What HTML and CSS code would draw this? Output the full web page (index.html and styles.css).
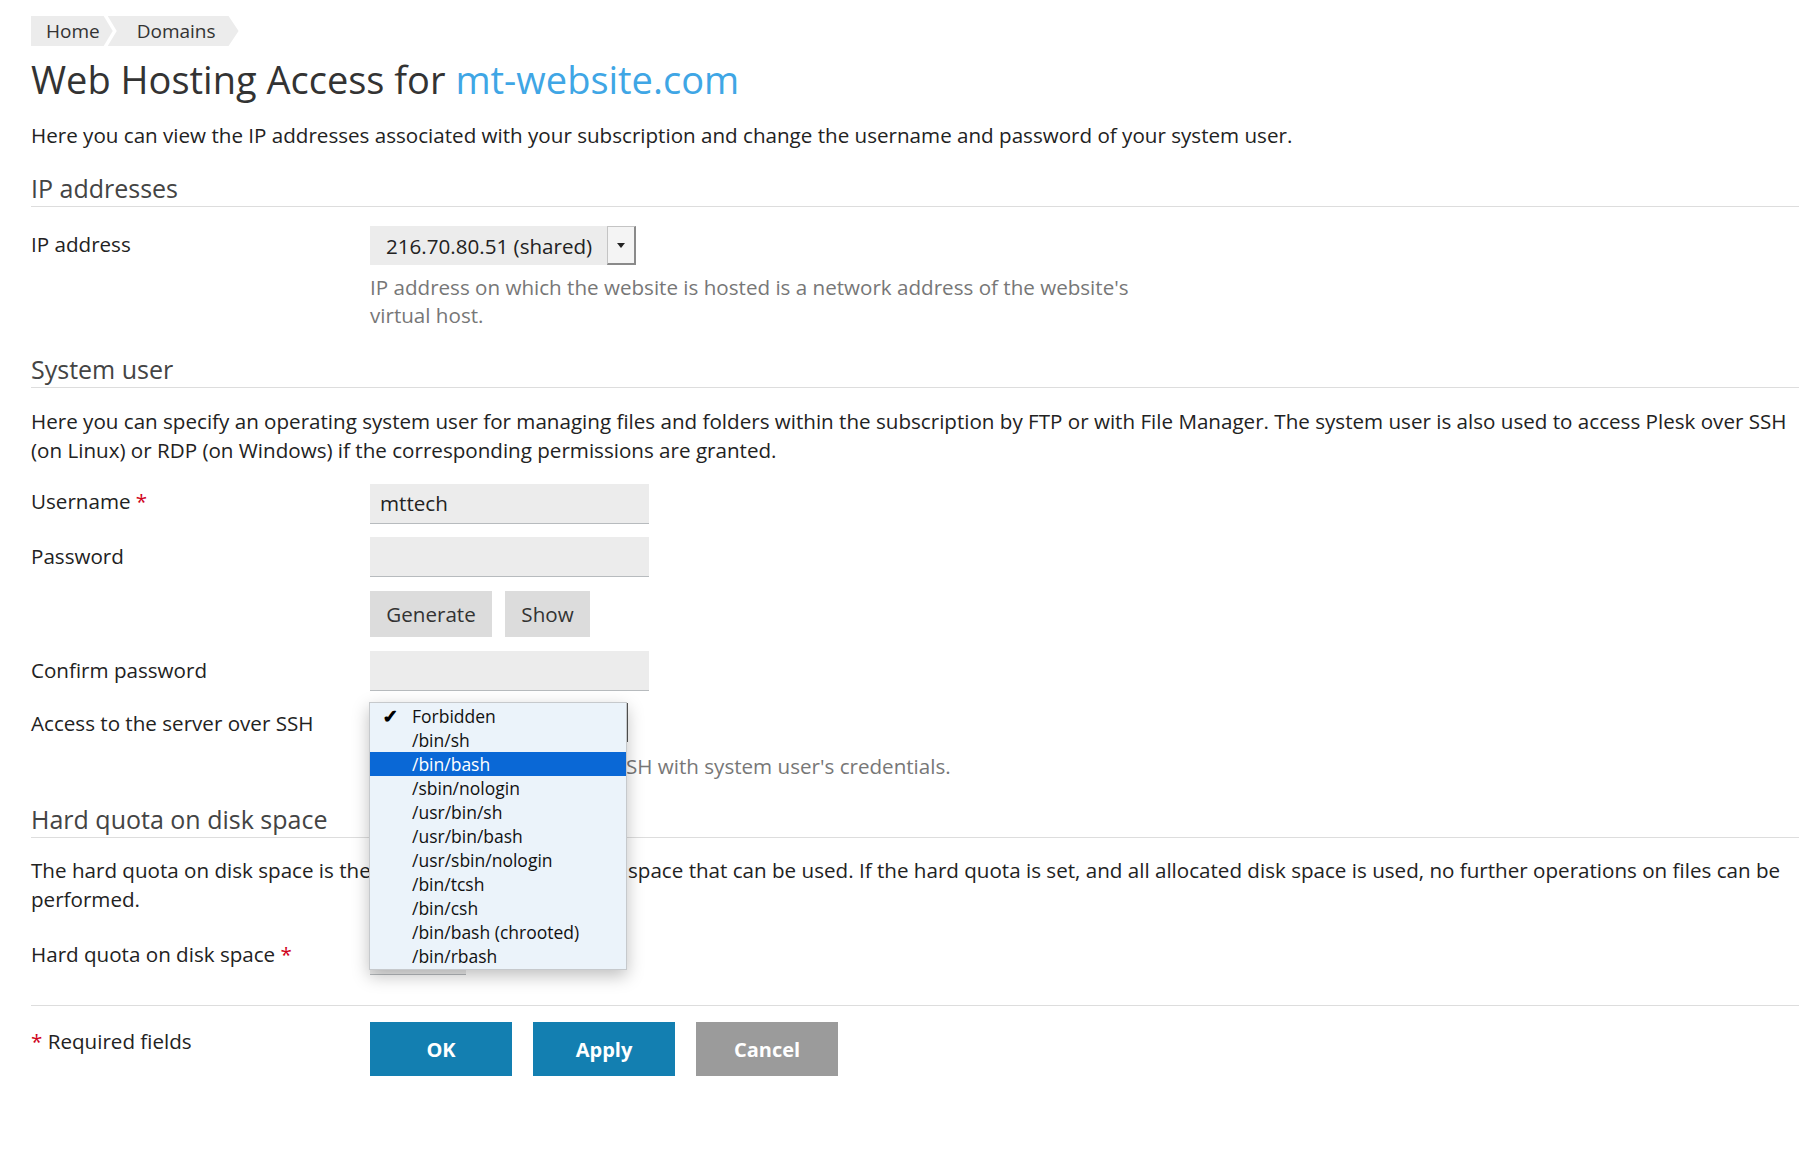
FILE: index.html
```html
<!DOCTYPE html>
<html>
<head>
<meta charset="utf-8">
<link rel="stylesheet" href="styles.css">
</head>
<body>
<div class="page">
  <div class="breadcrumb">
    <span class="crumb crumb-first">Home</span>
    <span class="crumb crumb-next">Domains</span>
  </div>
  <h1 class="title">Web Hosting Access for <span class="domain">mt-website.com</span></h1>
  <p class="intro">Here you can view the IP addresses associated with your subscription and change the username and password of your system user.</p>

  <h2 class="section">IP addresses</h2>
  <div class="row row-ip">
    <div class="label">IP address</div>
    <div class="field">
      <div class="select">
        <span class="select-value">216.70.80.51 (shared)</span>
        <span class="select-arrow"><span class="tri"></span></span>
      </div>
      <div class="hint">IP address on which the website is hosted is a network address of the website's virtual host.</div>
    </div>
  </div>

  <h2 class="section section-sys">System user</h2>
  <p class="desc">Here you can specify an operating system user for managing files and folders within the subscription by FTP or with File Manager. The system user is also used to access Plesk over SSH (on Linux) or RDP (on Windows) if the corresponding permissions are granted.</p>

  <div class="row row-user">
    <div class="label">Username <span class="req">*</span></div>
    <div class="field"><div class="input">mttech</div></div>
  </div>
  <div class="row row-pass">
    <div class="label">Password</div>
    <div class="field"><div class="input"></div></div>
  </div>
  <div class="row row-btns">
    <div class="label"></div>
    <div class="field btns">
      <span class="btn-gray btn-gen">Generate</span>
      <span class="btn-gray btn-show">Show</span>
    </div>
  </div>
  <div class="row row-confirm">
    <div class="label">Confirm password</div>
    <div class="field"><div class="input"></div></div>
  </div>
  <div class="row row-ssh">
    <div class="label label-ssh">Access to the server over SSH</div>
    <div class="field field-ssh">
      <div class="select-hidden"></div>
      <div class="hint hint-ssh">Access to the server over SSH with system user's credentials.</div>
      <ul class="menu">
        <li class="menu-item checked"><span class="check">✓</span>Forbidden</li>
        <li class="menu-item">/bin/sh</li>
        <li class="menu-item active">/bin/bash</li>
        <li class="menu-item">/sbin/nologin</li>
        <li class="menu-item">/usr/bin/sh</li>
        <li class="menu-item">/usr/bin/bash</li>
        <li class="menu-item">/usr/sbin/nologin</li>
        <li class="menu-item">/bin/tcsh</li>
        <li class="menu-item">/bin/csh</li>
        <li class="menu-item">/bin/bash (chrooted)</li>
        <li class="menu-item">/bin/rbash</li>
      </ul>
    </div>
  </div>

  <h2 class="section section-quota">Hard quota on disk space</h2>
  <p class="desc desc-quota">The hard quota on disk space is the maximum amount of disk space that can be used. If the hard quota is set, and all allocated disk space is used, no further operations on files can be performed.</p>
  <div class="row row-quota">
    <div class="label">Hard quota on disk space <span class="req">*</span></div>
    <div class="field"><div class="input input-quota"></div></div>
  </div>

  <div class="footer">
    <div class="label label-footer"><span class="req">*</span> Required fields</div>
    <div class="field actions">
      <span class="btn btn-primary">OK</span>
      <span class="btn btn-primary">Apply</span>
      <span class="btn btn-cancel">Cancel</span>
    </div>
  </div>
</div>
</body>
</html>
```
FILE: styles.css
```css
html, body {
  margin: 0;
  padding: 0;
  background: #ffffff;
}
body {
  font-family: "Open Sans", "Liberation Sans", sans-serif;
  font-size: 20.6px;
  color: #222222;
}
.page {
  padding: 16px 21px 40px 31px;
}
.breadcrumb {
  display: flex;
  height: 30px;
}
.crumb {
  display: flex;
  align-items: center;
  background: #ececec;
  color: #333;
  font-size: 19px;
  height: 30px;
}
.crumb-first {
  padding: 0 13px 0 15px;
  clip-path: polygon(0 0, calc(100% - 9px) 0, 100% 50%, calc(100% - 9px) 100%, 0 100%);
}
.crumb-next {
  margin-left: -5px;
  padding: 0 23px 0 29px;
  clip-path: polygon(0 0, calc(100% - 10px) 0, 100% 50%, calc(100% - 10px) 100%, 0 100%, 9px 50%);
}
.title {
  margin: 11px 0 0 0;
  font-size: 38px;
  line-height: 44px;
  font-weight: 400;
  color: #333;
}
.domain {
  color: #3fa6e5;
}
.intro {
  margin: 20px 0 0 0;
  line-height: 28px;
}
.section {
  margin: 24px 0 0 0;
  font-size: 25px;
  line-height: 30px;
  font-weight: 400;
  color: #444;
  padding-bottom: 3px;
  border-bottom: 1px solid #dddddd;
}
.section-sys {
  margin-top: 25px;
}
.section-quota {
  margin-top: 24px;
}
.desc {
  margin: 19px 0 0 0;
  line-height: 29px;
}
.desc-quota {
  margin-top: 18px;
}
.row {
  display: flex;
  align-items: flex-start;
}
.label {
  width: 339px;
  flex: none;
  line-height: 28px;
  padding-top: 4px;
}
.req {
  color: #d0021b;
}
.field {
  flex: 1;
}
.row-ip { margin-top: 19px; }
.row-user { margin-top: 19px; }
.row-user .label { padding-top: 3px; }
.row-pass { margin-top: 13px; }
.row-pass .label { padding-top: 5px; }
.row-btns { margin-top: 14px; }
.row-confirm { margin-top: 14px; }
.row-confirm .label { padding-top: 5px; }
.row-ssh { margin-top: 12px; }
.label-ssh { padding-top: 6px; }
.row-quota { margin-top: 21px; }
.row-quota .label { padding-top: 5px; }

.select {
  display: inline-flex;
  height: 39px;
}
.select-value {
  display: flex;
  align-items: center;
  background: #ececec;
  padding: 0 15px 0 16px;
  color: #222;
}
.select-arrow {
  box-sizing: border-box;
  display: flex;
  align-items: center;
  justify-content: center;
  width: 29px;
  background: #f4f4f4;
  border: 1px solid #c4c4c4;
  border-right: 2px solid #8a8a8a;
  border-bottom: 2px solid #8a8a8a;
}
.tri {
  width: 0;
  height: 0;
  border-left: 4px solid transparent;
  border-right: 4px solid transparent;
  border-top: 5px solid #222;
}
.hint {
  margin-top: 8px;
  max-width: 790px;
  color: #777;
  line-height: 28px;
}
.input {
  box-sizing: border-box;
  width: 279px;
  height: 40px;
  background: #ececec;
  border-bottom: 1px solid #b7bbbe;
  padding: 0 10px;
  line-height: 39px;
  color: #222;
}
.input-quota {
  width: 96px;
}
.btns {
  display: flex;
  gap: 13px;
}
.btn-gray {
  display: flex;
  align-items: center;
  justify-content: center;
  height: 46px;
  background: #dcdcdc;
  color: #333;
}
.btn-gen { width: 122px; }
.btn-show { width: 85px; }

.field-ssh {
  position: relative;
}
.select-hidden {
  box-sizing: border-box;
  width: 258px;
  height: 39px;
  background: #ececec;
  border-right: 2px solid #555;
}
.hint-ssh {
  margin-top: 10px;
}
.menu {
  position: absolute;
  left: -1px;
  top: -1px;
  width: 256px;
  margin: 0;
  padding: 1px 0;
  list-style: none;
  background: #ebf3fa;
  border: 1px solid #c6c9cc;
  box-shadow: 0 6px 16px rgba(0, 0, 0, 0.25);
  font-family: "Open Sans", "Liberation Sans", sans-serif;
  font-size: 17.5px;
  color: #111;
}
.menu-item {
  position: relative;
  height: 24px;
  line-height: 24px;
  padding-left: 42px;
}
.menu-item.active {
  background: #0a68d6;
  color: #ffffff;
}
.check {
  position: absolute;
  left: 12px;
  top: 0;
  font-size: 19px;
  font-weight: 700;
  color: #000;
  text-shadow: 0.5px 0 0 #000;
}

.footer {
  display: flex;
  align-items: flex-start;
  margin-top: 30px;
  border-top: 1px solid #dddddd;
  padding-top: 16px;
}
.label-footer {
  padding-top: 5px;
}
.actions {
  display: flex;
  gap: 21px;
}
.btn {
  display: flex;
  align-items: center;
  justify-content: center;
  width: 142px;
  height: 54px;
  color: #ffffff;
  font-weight: 700;
  font-size: 20px;
}
.btn-primary {
  background: #137fb1;
}
.btn-cancel {
  background: #9b9b9b;
}
```
